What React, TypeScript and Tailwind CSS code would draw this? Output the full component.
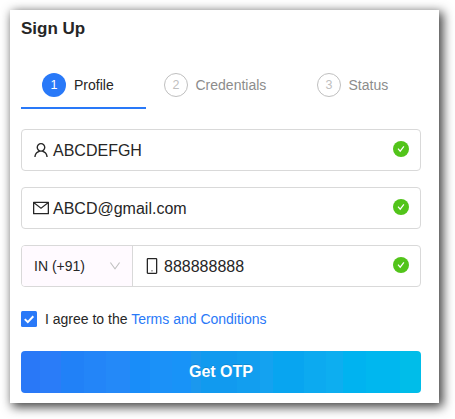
import React from 'react';
import { AiOutlineUser, AiOutlineMail, AiOutlineMobile, AiOutlineDown } from 'react-icons/ai';

const ICON_BOX = '64 64 896 896';

function Valid() {
  return (
    <svg className="mr-[11px] mb-[2px] shrink-0" width="16" height="16" viewBox="0 0 16 16">
      <circle cx="8" cy="8" r="8" fill="#52c41a" />
      <path d="M5 7.7L7.2 10.2L10.9 5.4" fill="none" stroke="#fff" strokeWidth="1.2" />
    </svg>
  );
}

function Field({ icon, value }: { icon: React.ReactNode; value: string }) {
  return (
    <div className="mb-4 flex h-[42px] items-center rounded border border-[#d9d9d9] pl-[11px]">
      {icon}
      <span className="ml-1 flex-1 pt-[2px] text-base leading-6">{value}</span>
      <Valid />
    </div>
  );
}

function Step({ n, label, active }: { n: number; label: string; active?: boolean }) {
  return (
    <div className="flex items-center">
      <span
        className={
          active
            ? 'mr-2 flex h-6 w-6 items-center justify-center rounded-full bg-[#2979f8] pt-px text-[12.5px] text-white'
            : 'mr-[7.5px] flex h-6 w-6 items-center justify-center rounded-full border border-[#bfbfbf] pt-px text-[12.5px] text-[#bfbfbf]'
        }
      >
        {n}
      </span>
      <span className={active ? 'text-[14px] text-[#262626]' : 'text-[14px] text-[#8c8c8c]'}>{label}</span>
    </div>
  );
}

export default function App() {
  return (
    <div className="h-[419px] w-[455px] overflow-hidden bg-white pt-[10px] pl-[10px] font-['Liberation_Sans',Arial,sans-serif] text-[#262626]">
      <main className="h-[393px] w-[429px] bg-white pr-[18px] pl-[11px] shadow-[3px_3px_10px_1px_rgba(0,0,0,0.75)]">
        <h1 className="pt-[7px] text-[17px] leading-6 font-bold">Sign Up</h1>

        <nav className="mt-[20px] flex h-[48px]">
          <div className="flex w-[125px] items-center border-b-2 border-[#2979f8] pt-[2px] pl-[21px]">
            <Step n={1} label="Profile" active />
          </div>
          <div className="ml-[18px] flex w-[153px] items-center">
            <Step n={2} label="Credentials" />
          </div>
          <div className="flex items-center">
            <Step n={3} label="Status" />
          </div>
        </nav>

        <form className="mt-5">
          <Field icon={<AiOutlineUser size={16} viewBox={ICON_BOX} />} value="ABCDEFGH" />
          <Field icon={<AiOutlineMail size={16} viewBox={ICON_BOX} />} value="ABCD@gmail.com" />
          <div className="flex h-[42px] rounded border border-[#d9d9d9]">
            <div className="flex w-[111px] items-center justify-between rounded-l-[3px] border-r border-[#d9d9d9] bg-[#fffaff] pr-[11px] pl-3 text-[14px]">
              <span>IN (+91)</span>
              <AiOutlineDown size={12} viewBox={ICON_BOX} color="#bfbfbf" />
            </div>
            <div className="flex flex-1 items-center pl-[11px]">
              <AiOutlineMobile size={16} viewBox={ICON_BOX} />
              <span className="ml-1 flex-1 pt-[2px] text-base leading-6">888888888</span>
              <Valid />
            </div>
          </div>

          <label className="mt-[22px] flex h-5 items-center text-[14px]">
            <svg className="mr-2" width="16" height="16" viewBox="0 0 16 16">
              <rect width="16" height="16" rx="1.5" fill="#2979f8" />
              <path d="M3.8 8.1L6.8 11.1L12.3 5.3" fill="none" stroke="#fff" strokeWidth="2" />
            </svg>
            <span>
              I agree to the <span className="text-[#2979f8]">Terms and Conditions</span>
            </span>
          </label>

          <button
            type="button"
            className="mt-[22px] flex h-[42px] w-full items-center justify-center rounded bg-[linear-gradient(90deg,#2978f7_19px,#2a7cf8_19px_40px,#2181f7_40px_63px,#2385f8_63px_85px,#2489f8_85px_109px,#198df9_109px_129px,#1b91f8_129px_151px,#1893f8_151px_170px,#1b98ee_170px_180px,#119aef_180px_216px,#129eef_216px_239px,#14a2f0_239px_252px,#08a5f0_252px_283px,#0caaf0_283px_305px,#0daef0_305px_322px,#00b3f0_322px_345px,#00b7ef_345px_379px,#00bde9_379px)] text-base font-bold text-white [text-shadow:0_-1px_0_rgba(0,0,0,0.12)]"
          >
            Get OTP
          </button>
        </form>
      </main>
    </div>
  );
}
